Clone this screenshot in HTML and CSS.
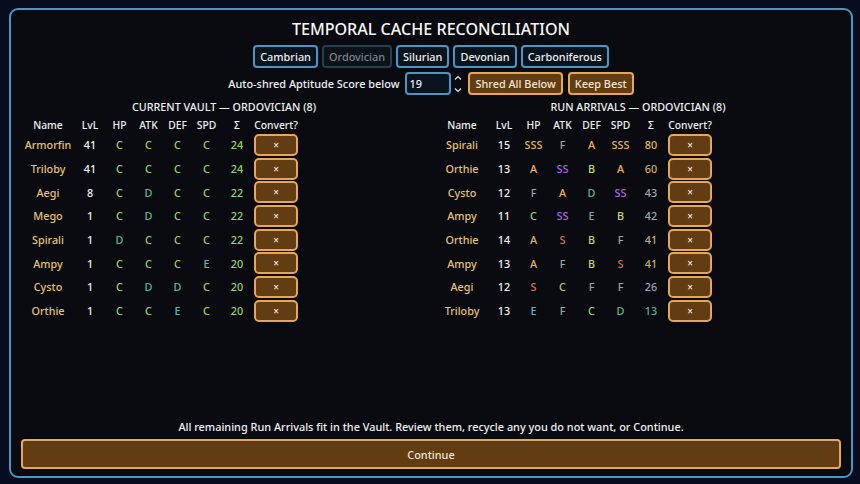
FILE: index.html
```html
<!DOCTYPE html>
<html lang="en">
<head>
    <meta charset="UTF-8">
    <meta name="viewport" content="width=device-width, initial-scale=1.0">
    <title>Temporal Cache Reconciliation</title>
    <link rel="stylesheet" href="styles.css">
</head>
<body>
    <div class="panel">
        <h1>TEMPORAL CACHE RECONCILIATION</h1>

        <div class="tabs">
            <button class="tab">Cambrian</button>
            <button class="tab active">Ordovician</button>
            <button class="tab">Silurian</button>
            <button class="tab">Devonian</button>
            <button class="tab">Carboniferous</button>
        </div>

        <div class="shred-bar">
            <label for="score">Auto-shred Aptitude Score below</label>
            <input type="text" id="score" value="19">
            <svg class="spinner" width="10" height="20" viewBox="0 0 10 20">
                <path d="M2 5.5 L5 2.5 L8 5.5"/>
                <path d="M2 14.5 L5 17.5 L8 14.5"/>
            </svg>
            <button class="btn">Shred All Below</button>
            <button class="btn">Keep Best</button>
        </div>

        <div class="columns">
            <section>
                <h2>CURRENT VAULT — ORDOVICIAN (8)</h2>
                <div class="row head"><span>Name</span><span>LvL</span><span>HP</span><span>ATK</span><span>DEF</span><span>SPD</span><span>Σ</span><span>Convert?</span></div>
                <div class="row"><span class="name">Armorfin</span><span class="lvl">41</span><span class="c">C</span><span class="c">C</span><span class="c">C</span><span class="c">C</span><span class="c">24</span><button class="btn x">×</button></div>
                <div class="row"><span class="name">Triloby</span><span class="lvl">41</span><span class="c">C</span><span class="c">C</span><span class="c">C</span><span class="c">C</span><span class="c">24</span><button class="btn x">×</button></div>
                <div class="row"><span class="name">Aegi</span><span class="lvl">8</span><span class="c">C</span><span class="d">D</span><span class="c">C</span><span class="c">C</span><span class="c">22</span><button class="btn x">×</button></div>
                <div class="row"><span class="name">Mego</span><span class="lvl">1</span><span class="c">C</span><span class="d">D</span><span class="c">C</span><span class="c">C</span><span class="c">22</span><button class="btn x">×</button></div>
                <div class="row"><span class="name">Spirali</span><span class="lvl">1</span><span class="d">D</span><span class="c">C</span><span class="c">C</span><span class="c">C</span><span class="c">22</span><button class="btn x">×</button></div>
                <div class="row"><span class="name">Ampy</span><span class="lvl">1</span><span class="c">C</span><span class="c">C</span><span class="c">C</span><span class="e">E</span><span class="c">20</span><button class="btn x">×</button></div>
                <div class="row"><span class="name">Cysto</span><span class="lvl">1</span><span class="c">C</span><span class="d">D</span><span class="d">D</span><span class="c">C</span><span class="c">20</span><button class="btn x">×</button></div>
                <div class="row"><span class="name">Orthie</span><span class="lvl">1</span><span class="c">C</span><span class="c">C</span><span class="e">E</span><span class="c">C</span><span class="c">20</span><button class="btn x">×</button></div>
            </section>
            <section>
                <h2>RUN ARRIVALS — ORDOVICIAN (8)</h2>
                <div class="row head"><span>Name</span><span>LvL</span><span>HP</span><span>ATK</span><span>DEF</span><span>SPD</span><span>Σ</span><span>Convert?</span></div>
                <div class="row"><span class="name">Spirali</span><span class="lvl">15</span><span class="sss">SSS</span><span class="f">F</span><span class="a">A</span><span class="sss">SSS</span><span class="sss">80</span><button class="btn x">×</button></div>
                <div class="row"><span class="name">Orthie</span><span class="lvl">13</span><span class="a">A</span><span class="ss">SS</span><span class="b">B</span><span class="a">A</span><span class="tan">60</span><button class="btn x">×</button></div>
                <div class="row"><span class="name">Cysto</span><span class="lvl">12</span><span class="f">F</span><span class="a">A</span><span class="d">D</span><span class="ss">SS</span><span class="f">43</span><button class="btn x">×</button></div>
                <div class="row"><span class="name">Ampy</span><span class="lvl">11</span><span class="c">C</span><span class="ss">SS</span><span class="e">E</span><span class="b">B</span><span class="f">42</span><button class="btn x">×</button></div>
                <div class="row"><span class="name">Orthie</span><span class="lvl">14</span><span class="a">A</span><span class="s">S</span><span class="b">B</span><span class="f">F</span><span class="khaki">41</span><button class="btn x">×</button></div>
                <div class="row"><span class="name">Ampy</span><span class="lvl">13</span><span class="a">A</span><span class="f">F</span><span class="b">B</span><span class="s">S</span><span class="khaki">41</span><button class="btn x">×</button></div>
                <div class="row"><span class="name">Aegi</span><span class="lvl">12</span><span class="s">S</span><span class="c">C</span><span class="f">F</span><span class="f">F</span><span class="f">26</span><button class="btn x">×</button></div>
                <div class="row"><span class="name">Triloby</span><span class="lvl">13</span><span class="e">E</span><span class="f">F</span><span class="c">C</span><span class="d">D</span><span class="d">13</span><button class="btn x">×</button></div>
            </section>
        </div>

        <p class="note">All remaining Run Arrivals fit in the Vault. Review them, recycle any you do not want, or Continue.</p>
        <button class="btn continue">Continue</button>
    </div>
</body>
</html>
```
FILE: styles.css
```css
* {
    box-sizing: border-box;
}

html, body {
    height: 100%;
}

body {
    margin: 0;
    padding: 8px 7px 6px 9px;
    background: #070c1e;
    font-family: "Noto Sans", sans-serif;
    color: #eef1f3;
    overflow: hidden;
}

.panel {
    height: 470px;
    display: flex;
    flex-direction: column;
    padding: 6px 10px 7px 10px;
    background: #090b10;
    border: 2px solid #4a96c4;
    border-radius: 9px;
}

h1 {
    margin: 0;
    height: 26px;
    line-height: 26px;
    text-align: center;
    font-size: 16.1px;
    font-weight: 500;
    color: #f8f8f8;
}

.tabs, .shred-bar {
    display: flex;
    justify-content: center;
    align-items: center;
}

.tabs {
    gap: 4px;
    margin-top: 3px;
}

.tab {
    height: 23px;
    padding: 0 5px;
    background: #0b131c;
    border: 2px solid #4a96c4;
    border-radius: 4px;
    font-family: inherit;
    font-size: 10.9px;
    font-weight: 500;
    color: #eef1f3;
}

.tab.active {
    background: #0c1218;
    border-color: #24404f;
    color: #7c8589;
}

.shred-bar {
    margin-top: 4px;
    font-size: 10.9px;
    font-weight: 500;
}

.shred-bar label {
    margin-right: 6px;
}

#score {
    width: 46px;
    height: 23px;
    padding: 0 2px;
    background: #0a141e;
    border: 2px solid #4a96c4;
    border-radius: 4px;
    font-family: inherit;
    font-size: 10.9px;
    font-weight: 500;
    color: #eef1f3;
}

.spinner {
    margin: 0 5px 0 2px;
}

.spinner path {
    fill: none;
    stroke: #e6e8ea;
    stroke-width: 1.2;
}

.btn {
    height: 23px;
    padding: 0 5px;
    margin-right: 5px;
    background: #623c12;
    border: 2px solid #e6a65c;
    border-radius: 4px;
    font-family: inherit;
    font-size: 10.9px;
    font-weight: 500;
    color: #f0e6d8;
}

.shred-bar .btn:last-child {
    margin-right: 0;
}

.columns {
    display: grid;
    grid-template-columns: 1fr 1fr;
    gap: 8px;
    margin-top: 4px;
}

h2 {
    margin: 0;
    height: 17px;
    line-height: 17px;
    text-align: center;
    font-size: 10.75px;
    font-weight: 500;
    color: #eef1f3;
}

.row {
    display: grid;
    grid-template-columns: 54px 30px 29px 29px 29px 29px 32px 46px;
    align-items: center;
    height: 23.7px;
    font-size: 10.8px;
    font-weight: 500;
    text-align: center;
}

.row.head {
    height: 17px;
    font-size: 10.3px;
    color: #eef1f3;
}

.row .x {
    justify-self: center;
    width: 44px;
    height: 22px;
    margin: 0;
    padding: 0;
    border-radius: 5px;
    font-size: 10px;
    color: #f6eee2;
}

.name { color: #e6c278; }
.lvl { color: #f2f2f2; }
.c { color: #a2d070; }
.d { color: #60b890; }
.e { color: #72b2ba; }
.f { color: #a0a8ac; }
.b { color: #c4d870; }
.a { color: #f0b060; }
.s { color: #d8735a; }
.ss { color: #b068e0; }
.sss { color: #e8b860; }
.tan { color: #d8a878; }
.khaki { color: #c8b070; }

.note {
    margin: auto 0 2px 0;
    height: 20px;
    line-height: 20px;
    text-align: center;
    font-size: 10.9px;
    font-weight: 500;
    color: #f2f2f2;
}

.continue {
    width: 100%;
    height: 30px;
    margin: 0;
    flex: none;
}
```
